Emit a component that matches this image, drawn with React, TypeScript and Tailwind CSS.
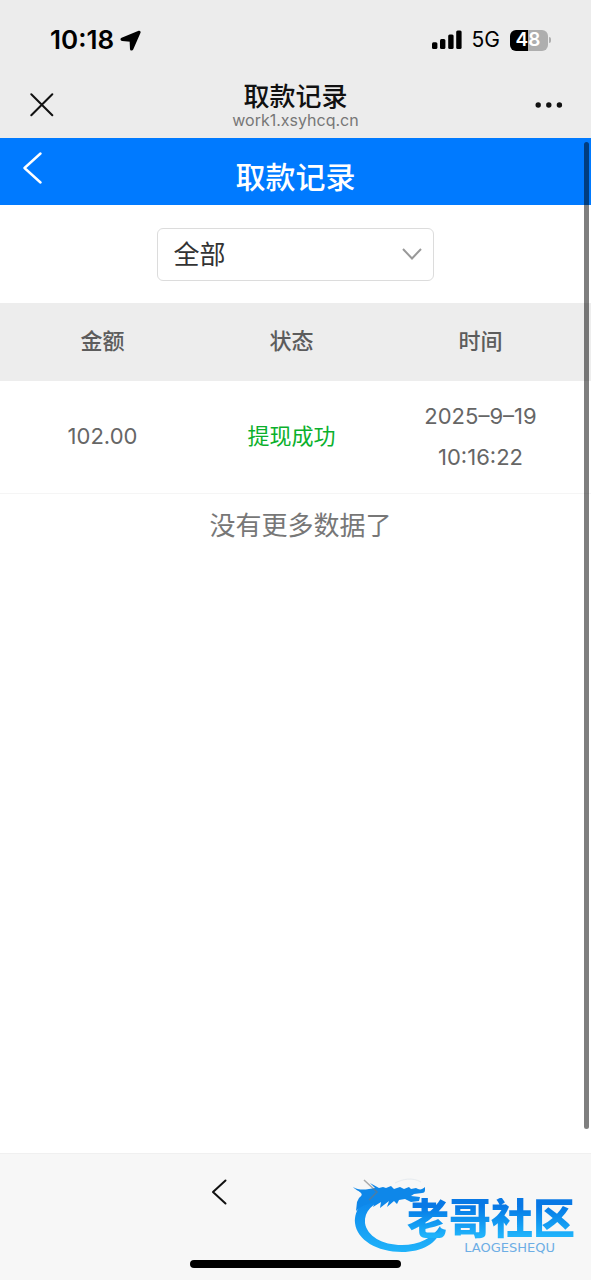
import React from "react";

const records = [
  { amount: "102.00", status: "提现成功", date: "2025–9–19", time: "10:16:22" },
];

function StatusBar() {
  return (
    <div className="flex h-[72px] items-center justify-between pt-2 pr-10 pl-[50px]">
      <div className="flex items-center gap-1.5">
        <span className="text-[26px] leading-8 font-semibold">10:18</span>
        <svg className="h-[21px] w-[21px]" viewBox="0 0 21 21" aria-hidden="true">
          <path
            d="M19 1.8 2 8.7c-.8.4-.7 1.2.2 1.3l8.4.7.4 8.2c0 .8.9 1 1.3.2L19.6 2.4c.2-.5-.1-.8-.6-.6z"
            fill="#000"
            stroke="#000"
            strokeWidth="2"
            strokeLinejoin="round"
          />
        </svg>
      </div>
      <div className="flex items-center">
        <svg className="h-5 w-[30px]" viewBox="0 0 30 20" aria-hidden="true">
          <rect x="0" y="12.2" width="5.4" height="6.8" rx="1.5" />
          <rect x="8" y="9" width="5.4" height="10" rx="1.5" />
          <rect x="16.2" y="4.5" width="5.4" height="14.5" rx="1.5" />
          <rect x="24.2" y=".5" width="5.4" height="18.5" rx="1.5" />
        </svg>
        <span className="ml-2.5 text-[21px] leading-6">5G</span>
        <div className="ml-2.5 flex items-center gap-px">
          <div className="flex h-[21px] w-[38px] items-center justify-center rounded-md bg-linear-to-r from-black from-48% to-[#aeaeae] to-48% pr-0.5 text-[19px] leading-5 font-semibold text-white">
            48
          </div>
          <div className="h-1.5 w-0.5 rounded-r-full bg-[#aeaeae]" />
        </div>
      </div>
    </div>
  );
}

function BrowserBar() {
  return (
    <div className="flex h-[66px] items-center justify-between px-7">
      <button type="button" aria-label="关闭" className="flex h-10 w-7 items-center justify-center">
        <svg className="h-6 w-6" viewBox="0 0 24 24" fill="none" stroke="#111" strokeWidth="2" strokeLinecap="round">
          <path d="M1.3 1.3 22.3 22.3M22.3 1.3 1.3 22.3" />
        </svg>
      </button>
      <div className="pt-0.5 text-center">
        <div className="text-[26px] leading-7 font-medium text-[#111]">取款记录</div>
        <div className="text-[16px] leading-[18px] text-[#777]">work1.xsyhcq.cn</div>
      </div>
      <button type="button" aria-label="更多" className="flex h-10 w-7 items-center justify-center">
        <svg className="h-2 w-7" viewBox="0 0 28 8" fill="#111">
          <circle cx="3.2" cy="4" r="2.7" />
          <circle cx="13.8" cy="4" r="2.7" />
          <circle cx="24.4" cy="4" r="2.7" />
        </svg>
      </button>
    </div>
  );
}

function Watermark() {
  return (
    <div className="pointer-events-none absolute top-6 right-4 flex h-20 w-[222px] flex-col items-end pt-5">
      <svg className="absolute inset-0 h-20 w-[222px]" viewBox="0 0 222 80" fill="none" aria-hidden="true">
        <defs>
          <linearGradient id="dragon" x1="0" y1="0" x2="0" y2="1">
            <stop offset="0" stopColor="#0a80ea" />
            <stop offset="1" stopColor="#20b3fa" />
          </linearGradient>
        </defs>
        <path
          d="M25 14C10 20 1 32 2 45c2 17 22 29 47 29 20 0 36-9 39-23l-1-3c-7 12-21 19-38 19-20 0-35-9-37-22-1-12 8-20 21-24z"
          fill="url(#dragon)"
        />
        <path
          d="M0 9c5 3 10 3 16 2l6-1-5-5 9 5 4-1 3 1 5-2 3 3 6-2 4 2 5-2 2 2 5-1c3 2 6 2 9-1v3c0 2-1 3-3 3l-8 1-3 2 9 1-1 4-8 1-6-3-6 1-2 4-3-3-7 6 2-6-9 7 1-6-8 5 2-5-7 2c-5 1-9 4-12 7l1-9 2-4C13 15 5 14 0 9z"
          fill="#0e87e9"
        />
        <path d="M42 5c8-4 17-6 26-1" stroke="#e6ebef" strokeWidth="1" />
        <path d="M11 2 24 14 16 22" stroke="#777" strokeWidth="1.5" opacity=".6" />
      </svg>
      <div className="relative bg-linear-to-b from-[#0878e5] from-20% to-[#20b3fb] to-90% bg-clip-text text-[42px] leading-[42px] font-black whitespace-nowrap text-transparent">
        老哥社区
      </div>
      <div className="relative mr-5 font-['DejaVu_Sans',sans-serif] text-[13px] leading-4 text-[#6daee5]">LAOGESHEQU</div>
    </div>
  );
}

export default function App() {
  return (
    <div className="flex min-h-screen flex-col bg-white font-[Inter,'Noto_Sans_CJK_SC',sans-serif] text-black">
      <header className="bg-[#ececec]">
        <StatusBar />
        <BrowserBar />
      </header>

      <main className="relative flex-1">
        <div className="grid h-[67px] grid-cols-[40px_1fr_40px] bg-[#007aff] px-3 text-white">
          <button type="button" aria-label="返回" className="flex h-[60px] w-10 items-center justify-center">
            <svg className="h-8 w-5" viewBox="0 0 20 32" fill="none" stroke="currentColor" strokeWidth="2.4" strokeLinecap="round" strokeLinejoin="round">
              <path d="M18.5 1.5 2.5 16l16 14.5" />
            </svg>
          </button>
          <h1 className="pt-3 text-center text-[30px] leading-[54px] font-medium">取款记录</h1>
        </div>

        <div className="flex h-[98px] items-center justify-center">
          <div className="relative w-[47%]">
            <select
              aria-label="状态筛选"
              className="h-[53px] w-full appearance-none rounded-md border border-[#dcdcdc] bg-white px-4 text-[26px] text-[#333]"
            >
              <option>全部</option>
              <option>提现成功</option>
            </select>
            <svg className="pointer-events-none absolute top-5 right-3 h-3 w-5" viewBox="0 0 20 12" fill="none" stroke="#999" strokeWidth="2">
              <path d="m1 1 9 9.5L19 1" />
            </svg>
          </div>
        </div>

        <table className="w-full table-fixed border-collapse text-center text-[22px] text-[#666]">
          <thead>
            <tr className="h-[78px] bg-[#ededed] text-[#5c5c5c]">
              <th className="pb-0.5 pl-2 font-medium">金额</th>
              <th className="pr-2 pb-0.5 font-medium">状态</th>
              <th className="pr-6 pb-0.5 font-medium">时间</th>
            </tr>
          </thead>
          <tbody>
            {records.map((r) => (
              <tr key={r.date + r.time} className="h-[112px] border-b border-[#f5f5f5]">
                <td className="pl-2">{r.amount}</td>
                <td className="pr-2 text-[#0bb02c]">{r.status}</td>
                <td className="pr-6 leading-[41px]">
                  <div>{r.date}</div>
                  <div>{r.time}</div>
                </td>
              </tr>
            ))}
          </tbody>
        </table>
        <p className="pt-2 pl-2.5 text-center text-[26px] leading-[48px] text-[#777]">没有更多数据了</p>

        <div className="absolute top-1 right-0.5 bottom-6 w-[5px] rounded-full bg-black/50" />
      </main>

      <footer className="relative flex h-[127px] flex-col items-center justify-between border-t border-[#f0f0f0] bg-[#f7f7f7] pt-5 pb-3">
        <button type="button" aria-label="后退" className="mr-[153px] flex h-9 w-8 items-center justify-center">
          <svg className="h-[26px] w-4" viewBox="0 0 16 26" fill="none" stroke="#111" strokeWidth="2" strokeLinecap="round" strokeLinejoin="round">
            <path d="M14.5 1.5 2 13l12.5 11.5" />
          </svg>
        </button>
        <div className="h-2 w-[211px] rounded-full bg-black" />
        <Watermark />
      </footer>
    </div>
  );
}
